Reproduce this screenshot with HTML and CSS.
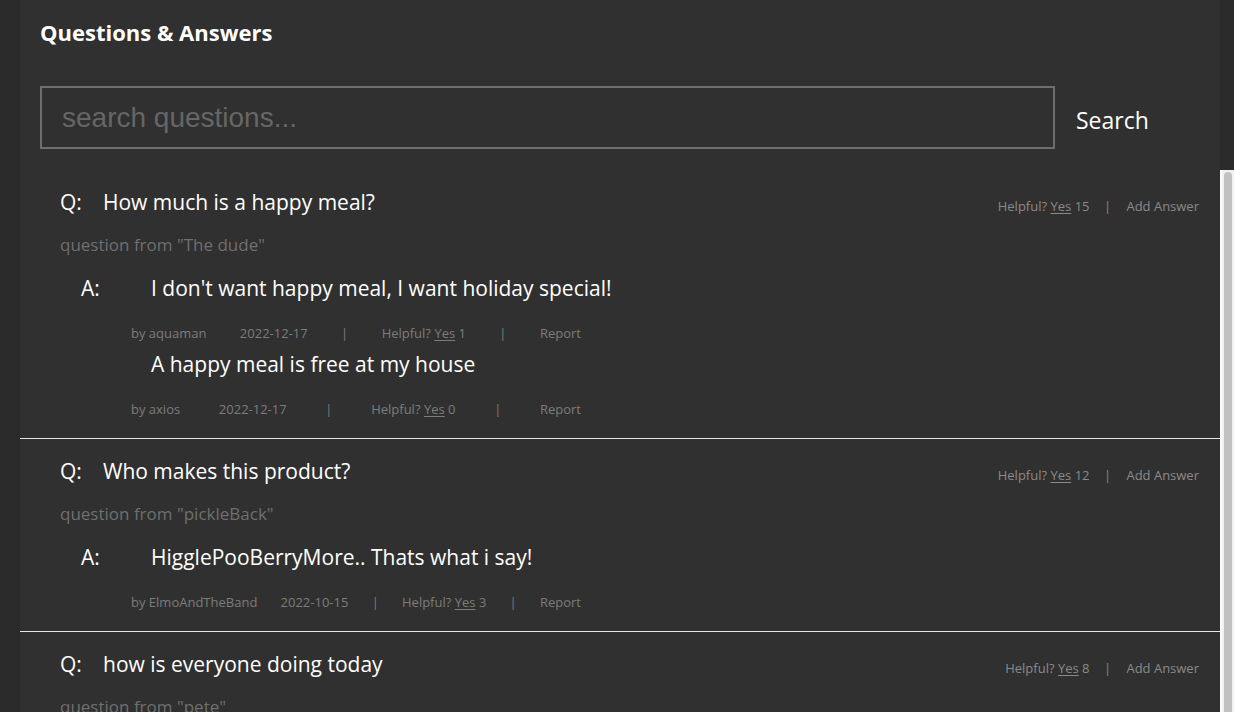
FILE: index.html
```html
<!DOCTYPE html>
<html>
<head>
<meta charset="utf-8">
<link rel="stylesheet" href="styles.css">
</head>
<body>
<section class="panel">
  <h2 class="title">Questions &amp; Answers</h2>
  <form class="search">
    <input class="search-input" type="text" placeholder="search questions...">
    <button class="search-btn" type="button">Search</button>
  </form>
  <div class="list-area">
    <div class="list">
      <article class="question">
        <div class="q-row">
          <span class="q-label">Q:</span>
          <span class="q-text">How much is a happy meal?</span>
          <div class="q-actions">Helpful? <u>Yes</u> 15 <span class="sep">|</span> Add Answer</div>
        </div>
        <div class="asker">question from "The dude"</div>
        <div class="answers">
          <div class="answer">
            <div class="a-row"><span class="a-label">A:</span><span class="a-text">I don't want happy meal, I want holiday special!</span></div>
            <div class="a-meta"><span>by aquaman</span><span>2022-12-17</span><span>|</span><span>Helpful? <u>Yes</u> 1</span><span>|</span><span>Report</span></div>
          </div>
          <div class="answer">
            <div class="a-row"><span class="a-label"></span><span class="a-text">A happy meal is free at my house</span></div>
            <div class="a-meta"><span>by axios</span><span>2022-12-17</span><span>|</span><span>Helpful? <u>Yes</u> 0</span><span>|</span><span>Report</span></div>
          </div>
        </div>
      </article>
      <article class="question">
        <div class="q-row">
          <span class="q-label">Q:</span>
          <span class="q-text">Who makes this product?</span>
          <div class="q-actions">Helpful? <u>Yes</u> 12 <span class="sep">|</span> Add Answer</div>
        </div>
        <div class="asker">question from "pickleBack"</div>
        <div class="answers">
          <div class="answer">
            <div class="a-row"><span class="a-label">A:</span><span class="a-text">HigglePooBerryMore.. Thats what i say!</span></div>
            <div class="a-meta"><span>by ElmoAndTheBand</span><span>2022-10-15</span><span>|</span><span>Helpful? <u>Yes</u> 3</span><span>|</span><span>Report</span></div>
          </div>
        </div>
      </article>
      <article class="question">
        <div class="q-row">
          <span class="q-label">Q:</span>
          <span class="q-text">how is everyone doing today</span>
          <div class="q-actions">Helpful? <u>Yes</u> 8 <span class="sep">|</span> Add Answer</div>
        </div>
        <div class="asker">question from "pete"</div>
      </article>
    </div>
    <div class="scrollbar"><div class="thumb"></div></div>
  </div>
</section>
</body>
</html>
```
FILE: styles.css
```css
html, body {
  margin: 0;
  padding: 0;
  background: #2a2a2a;
  overflow: hidden;
  height: 712px;
}
body {
  font-family: "Open Sans", "Noto Sans", sans-serif;
  color: #fff;
}
.panel {
  width: 1200px;
  margin-left: 20px;
  background: #303030;
  height: 712px;
}
.title {
  margin: 0;
  padding: 18px 0 0 20px;
  font-family: "Open Sans", sans-serif;
  font-size: 22px;
  line-height: 28px;
  font-weight: 700;
  color: #fff;
}
.search {
  display: flex;
  align-items: center;
  margin: 40px 0 0 20px;
}
.search-input {
  width: 1015px;
  height: 63px;
  box-sizing: border-box;
  border: 2px solid #6e6e6e;
  background: transparent;
  padding: 0 20px;
  font-family: "Liberation Sans", Arial, sans-serif;
  font-size: 28px;
  color: #ddd;
  outline: none;
}
.search-input::placeholder {
  color: #666;
}
.search-btn {
  background: none;
  border: none;
  color: #fff;
  font-family: "Open Sans", sans-serif;
  font-size: 23px;
  padding: 4px 0 0 21px;
  cursor: pointer;
}
.list-area {
  margin-top: 21px;
  width: 1214px;
  height: 542px;
  display: flex;
}
.list {
  width: 1200px;
  flex: none;
  overflow: hidden;
}
.scrollbar {
  width: 14px;
  flex: none;
  box-sizing: border-box;
  background: #f1f1f1;
  border-left: 2px solid #fbfbfb;
  padding: 2px 2px 0 2px;
}
.thumb {
  height: 100%;
  background: #c1c1c1;
  border-radius: 4px 4px 0 0;
}
.question {
  box-sizing: border-box;
  padding: 20px 21px 21px 40px;
  border-bottom: 1px solid #e6e6e6;
}
.q-row {
  display: flex;
  align-items: flex-end;
  height: 24px;
}
.q-label {
  font-size: 21px;
  line-height: 24px;
  width: 43px;
}
.q-text {
  font-size: 21px;
  line-height: 24px;
  flex: 1;
}
.q-actions {
  font-size: 13px;
  line-height: 16px;
  color: #8a8a8a;
}
.q-actions u {
  text-underline-offset: 2px;
}
.q-actions .sep {
  margin: 0 12px 0 11px;
}
.asker {
  margin-top: 21px;
  font-size: 17px;
  line-height: 20px;
  color: #6f6f6f;
}
.answers {
  margin-top: 21px;
  padding-left: 21px;
}
.answer + .answer {
  margin-top: 11px;
}
.a-row {
  display: flex;
  font-size: 21px;
  line-height: 24px;
}
.a-label {
  width: 70px;
  flex: none;
}
.a-meta {
  margin: 25px 0 0 50px;
  width: 450px;
  display: flex;
  justify-content: space-between;
  font-size: 13px;
  line-height: 16px;
  color: #7c7c7c;
}
.a-meta u {
  text-underline-offset: 2px;
}
```
